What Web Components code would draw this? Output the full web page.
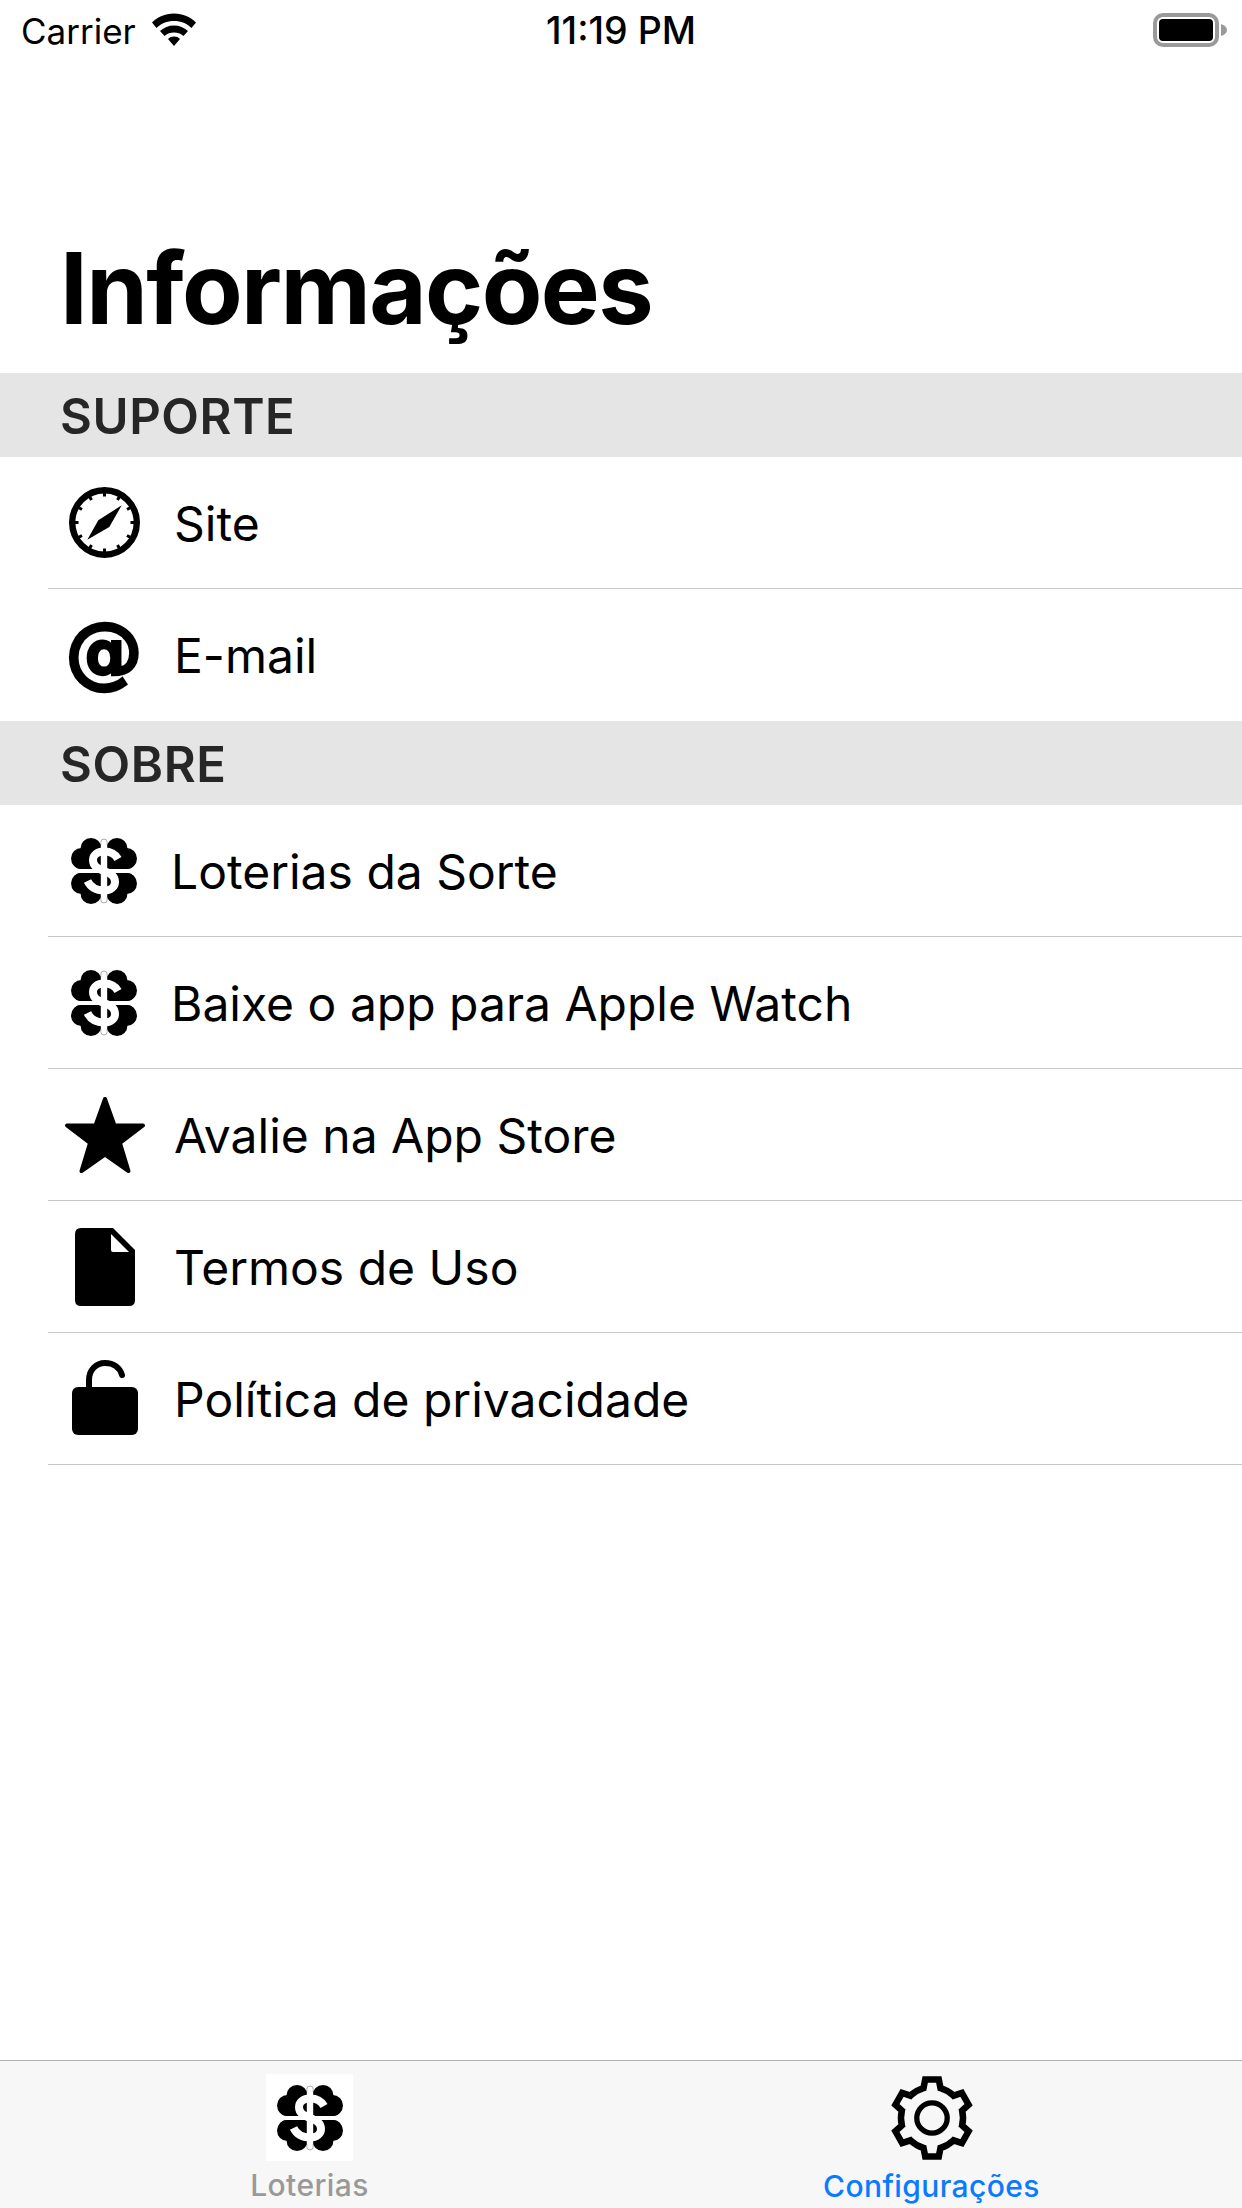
<!DOCTYPE html>
<html lang="pt">
<head>
<meta charset="utf-8">
<title>Informações</title>
<style>
  html, body { margin: 0; padding: 0; background: #fff; }
  body {
    width: 1242px;
    height: 2208px;
    display: flex;
    flex-direction: column;
    overflow: hidden;
    font-family: Inter, "Liberation Sans", sans-serif;
  }
  tab-bar { margin-top: auto; }
</style>
</head>
<body>
<status-bar carrier="Carrier" time="11:19 PM"></status-bar>
<large-title>Informações</large-title>

<section-header>SUPORTE</section-header>
<list-row text-left="174"><app-icon name="compass"></app-icon>Site</list-row>
<list-row text-left="174" no-line><app-icon name="at"></app-icon>E-mail</list-row>

<section-header>SOBRE</section-header>
<list-row text-left="171"><app-icon name="clover"></app-icon>Loterias da Sorte</list-row>
<list-row text-left="171"><app-icon name="clover"></app-icon>Baixe o app para Apple Watch</list-row>
<list-row text-left="174"><app-icon name="star"></app-icon>Avalie na App Store</list-row>
<list-row text-left="174"><app-icon name="doc"></app-icon>Termos de Uso</list-row>
<list-row text-left="174"><app-icon name="lock"></app-icon>Política de privacidade</list-row>

<tab-bar>
  <tab-item label="Loterias" nudge><app-icon name="clover-tile"></app-icon></tab-item>
  <tab-item label="Configurações" active><app-icon name="gear"></app-icon></tab-item>
</tab-bar>

<script>
// gear outline: six teeth, one pointing straight up, arcs between them
function gearPath(cx, cy, rOut, rIn) {
  const p = (deg, r) => {
    const t = ((deg - 90) * Math.PI) / 180;
    return (cx + r * Math.cos(t)).toFixed(1) + " " + (cy + r * Math.sin(t)).toFixed(1);
  };
  let d = "";
  for (let i = 0; i < 6; i++) {
    const a = i * 60;
    d += (i ? `A${rIn} ${rIn} 0 0 1 ` : "M") + p(a - 16, rIn);
    d += "L" + p(a - 10, rOut) + "L" + p(a + 10, rOut) + "L" + p(a + 16, rIn);
  }
  return d + `A${rIn} ${rIn} 0 0 1 ` + p(-16, rIn) + "Z";
}

// compass ticks around the dial
function compassTicks() {
  let d = "";
  for (let i = 0; i < 12; i++) {
    const t = (i * 30 * Math.PI) / 180;
    const x1 = 35.5 + 30 * Math.cos(t), y1 = 35.5 + 30 * Math.sin(t);
    const x2 = 35.5 + 26 * Math.cos(t), y2 = 35.5 + 26 * Math.sin(t);
    d += `M${x1.toFixed(1)} ${y1.toFixed(1)}L${x2.toFixed(1)} ${y2.toFixed(1)}`;
  }
  return d;
}

const cloverLobes = `
  <circle cx="20" cy="10.500" r="10.500"/><circle cx="10.500" cy="20.500" r="10.500"/>
  <path d="M14 6H33V31H10Q5 31 3 27Z"/>`;

const cloverShape = `
  <g fill="#000">
    <g>${cloverLobes}</g>
    <g transform="matrix(-1 0 0 1 66 0)">${cloverLobes}</g>
    <g transform="matrix(1 0 0 -1 0 66)">${cloverLobes}</g>
    <g transform="matrix(-1 0 0 -1 66 66)">${cloverLobes}</g>
  </g>
  <path d="M47 21C44 15.500 38.500 13.500 33 13.500C26.500 13.500 22 17 22 22C22 29 28 31 33 33C38 35 44 37 44 44C44 49 39.500 52.500 33 52.500C27 52.500 20 50 16.500 43" fill="none" stroke="#fff" stroke-width="8"/>
  <rect x="29.800" y="1" width="6.400" height="64" rx="3.200" fill="#fff"/>
  <path d="M29.800 7V4.200A3.200 3.200 0 0 1 36.200 4.200V7M29.800 59V61.800A3.200 3.200 0 0 0 36.200 61.800V59" fill="none" stroke="#777" stroke-width=".6"/>`;

const ICONS = {
  compass: { w: 71, h: 71, ml: 21, body: `
    <circle cx="35.500" cy="35.500" r="32.300" fill="none" stroke="#000" stroke-width="6.400"/>
    <path d="${compassTicks()}" stroke="#000" stroke-width="3"/>
    <path d="M52.700 18.300L40.300 40L18.300 52.700L29.300 33.300Z" fill="#000"/>` },
  clover: { w: 66, h: 66, ml: 23, body: cloverShape },
  "clover-tile": { w: 87, h: 87, ml: 0, body: `
    <rect width="87" height="87" fill="#fff"/>
    <g transform="translate(11 11)">${cloverShape}</g>` },
  star: { w: 82, h: 78, ml: 16, body: `
    <path d="M41 3L50.500 29.500H79L56 47L64.500 75L41 58.500L17.500 75L26 47L3 29.500H31.500Z" fill="#000" stroke="#000" stroke-width="4" stroke-linejoin="round"/>` },
  doc: { w: 60, h: 78, ml: 27, body: `
    <path d="M6 0H38L60 22V72Q60 78 54 78H6Q0 78 0 72V6Q0 0 6 0Z" fill="#000"/>
    <path d="M36 6L54 24H38Q36 24 36 22Z" fill="#fff"/>` },
  lock: { w: 66, h: 75, ml: 24, mb: 2, body: `
    <path d="M17 32V20C17 10 24 3 33 3C42 3 48 8 50 15" fill="none" stroke="#000" stroke-width="6" stroke-linecap="round"/>
    <rect y="27" width="66" height="48" rx="6" fill="#000"/>` },
  gear: { w: 88, h: 88, ml: 0, body: `
    <path d="${gearPath(44, 44, 39, 31)}" fill="none" stroke="#000" stroke-width="6.500"/>
    <circle cx="44" cy="44" r="15.200" fill="none" stroke="#000" stroke-width="5.300"/>` },
};

class AppIcon extends HTMLElement {
  connectedCallback() {
    const name = this.getAttribute("name");
    const root = this.attachShadow({ mode: "open" });
    if (name === "at") {
      // the @ of the reference is just a heavy glyph
      root.innerHTML = `<style>
        :host { display: block; margin: 0 0 8px 17px; width: 78px; height: 78px; }
        span { display: block; font: 700 78px/78px "DejaVu Sans", sans-serif; color: #000; text-align: center; -webkit-text-stroke: 2.500px #000; }
      </style><span>@</span>`;
      return;
    }
    const ic = ICONS[name];
    root.innerHTML = `<style>
      :host { display: block; margin: 0 0 ${ic.mb || 0}px ${ic.ml}px; width: ${ic.w}px; height: ${ic.h}px; }
      svg { display: block; }
    </style><svg width="${ic.w}" height="${ic.h}" viewBox="0 0 ${ic.w} ${ic.h}">${ic.body}</svg>`;
  }
}

class StatusBar extends HTMLElement {
  connectedCallback() {
    this.attachShadow({ mode: "open" }).innerHTML = `<style>
      :host { display: block; height: 60px; flex: none; font: 400 35px/60px Inter, "Liberation Sans", sans-serif; color: #000; }
      .bar { display: grid; grid-template-columns: 1fr auto 1fr; height: 60px; align-items: center; }
      .left { display: flex; align-items: center; gap: 15px; padding-left: 21px; }
      .left span, .time { position: relative; top: 1px; }
      .time { font-size: 37.500px; font-weight: 500; }
      .right { display: flex; justify-content: flex-end; padding-right: 15px; }
      svg { display: block; }
    </style>
    <div class="bar">
      <div class="left"><span>${this.getAttribute("carrier")}</span>
        <svg width="46" height="34" viewBox="0 0 46 34">
          <path d="M23 0.500C14 0.500 6.500 4 1 9.500L5.500 15C10 10.500 16 8 23 8C30 8 36 10.500 40.500 15L45 9.500C39.500 4 32 0.500 23 0.500Z"/>
          <path d="M23 12.500C17.500 12.500 13 14.500 9 18L13.500 23C16 20.500 19.500 19.500 23 19.500C26.500 19.500 30 20.500 32.500 23L37 18C33 14.500 28.500 12.500 23 12.500Z"/>
          <path d="M23 23.500C20.500 23.500 18.500 24.300 17 26L23 33L29 26C27.500 24.300 25.500 23.500 23 23.500Z"/>
        </svg>
      </div>
      <div class="time">${this.getAttribute("time")}</div>
      <div class="right">
        <svg width="74" height="34" viewBox="0 0 74 34">
          <rect x="2" y="2" width="62" height="30" rx="8" fill="none" stroke="#9a9a9a" stroke-width="4"/>
          <rect x="6" y="6" width="54" height="22" rx="4"/>
          <path d="M68 11Q74 13 74 17Q74 21 68 23Z" fill="#9a9a9a"/>
        </svg>
      </div>
    </div>`;
  }
}

class LargeTitle extends HTMLElement {
  connectedCallback() {
    this.attachShadow({ mode: "open" }).innerHTML = `<style>
      :host { display: block; flex: none; height: 313px; box-sizing: border-box; padding: 167px 0 0 60px;
        font: 700 99px/122px Inter, "Liberation Sans", sans-serif; letter-spacing: -1.600px; color: #000; }
    </style><slot></slot>`;
  }
}

class SectionHeader extends HTMLElement {
  connectedCallback() {
    this.attachShadow({ mode: "open" }).innerHTML = `<style>
      :host { display: flex; flex: none; align-items: center; height: 84px; box-sizing: border-box; padding: 3px 0 0 60px;
        background: #e5e5e5; font: 600 49px/1 Inter, "Liberation Sans", sans-serif; letter-spacing: .600px; color: #262626; }
    </style><slot></slot>`;
  }
}

class ListRow extends HTMLElement {
  connectedCallback() {
    const textLeft = Number(this.getAttribute("text-left")) - 48;
    const line = this.hasAttribute("no-line") ? "" : "border-bottom: 1px solid #c8c8ca;";
    this.attachShadow({ mode: "open" }).innerHTML = `<style>
      :host { display: block; flex: none; height: 132px; padding-left: 48px; font: 400 48px/1 Inter, "Liberation Sans", sans-serif; color: #000; }
      .inner { display: grid; grid-template-columns: ${textLeft}px 1fr; align-items: center; height: 131px; ${line} }
      .text { padding-top: 2px; }
    </style>
    <div class="inner"><div><slot name="icon"></slot></div><div class="text"><slot></slot></div></div>`;
    const icon = this.querySelector("app-icon");
    if (icon) icon.slot = "icon";
  }
}

class TabBar extends HTMLElement {
  connectedCallback() {
    this.attachShadow({ mode: "open" }).innerHTML = `<style>
      :host { display: grid; flex: none; grid-template-columns: 1fr 1fr; height: 148px; box-sizing: border-box;
        background: #f7f7f7; border-top: 1px solid #b4b4b4; }
    </style><slot></slot>`;
  }
}

class TabItem extends HTMLElement {
  connectedCallback() {
    const active = this.hasAttribute("active");
    const nudge = this.hasAttribute("nudge") ? "padding-right: 2px;" : "";
    this.attachShadow({ mode: "open" }).innerHTML = `<style>
      :host { display: flex; flex-direction: column; align-items: center; padding-top: 13px; ${nudge}
        font: 500 30px/36px Inter, "Liberation Sans", sans-serif; letter-spacing: .4px; color: ${active ? "#0a7aff" : "#999"}; }
      .label { margin-top: 6px; }
    </style><slot></slot><div class="label">${this.getAttribute("label")}</div>`;
  }
}

customElements.define("app-icon", AppIcon);
customElements.define("status-bar", StatusBar);
customElements.define("large-title", LargeTitle);
customElements.define("section-header", SectionHeader);
customElements.define("list-row", ListRow);
customElements.define("tab-bar", TabBar);
customElements.define("tab-item", TabItem);
</script>
</body>
</html>
